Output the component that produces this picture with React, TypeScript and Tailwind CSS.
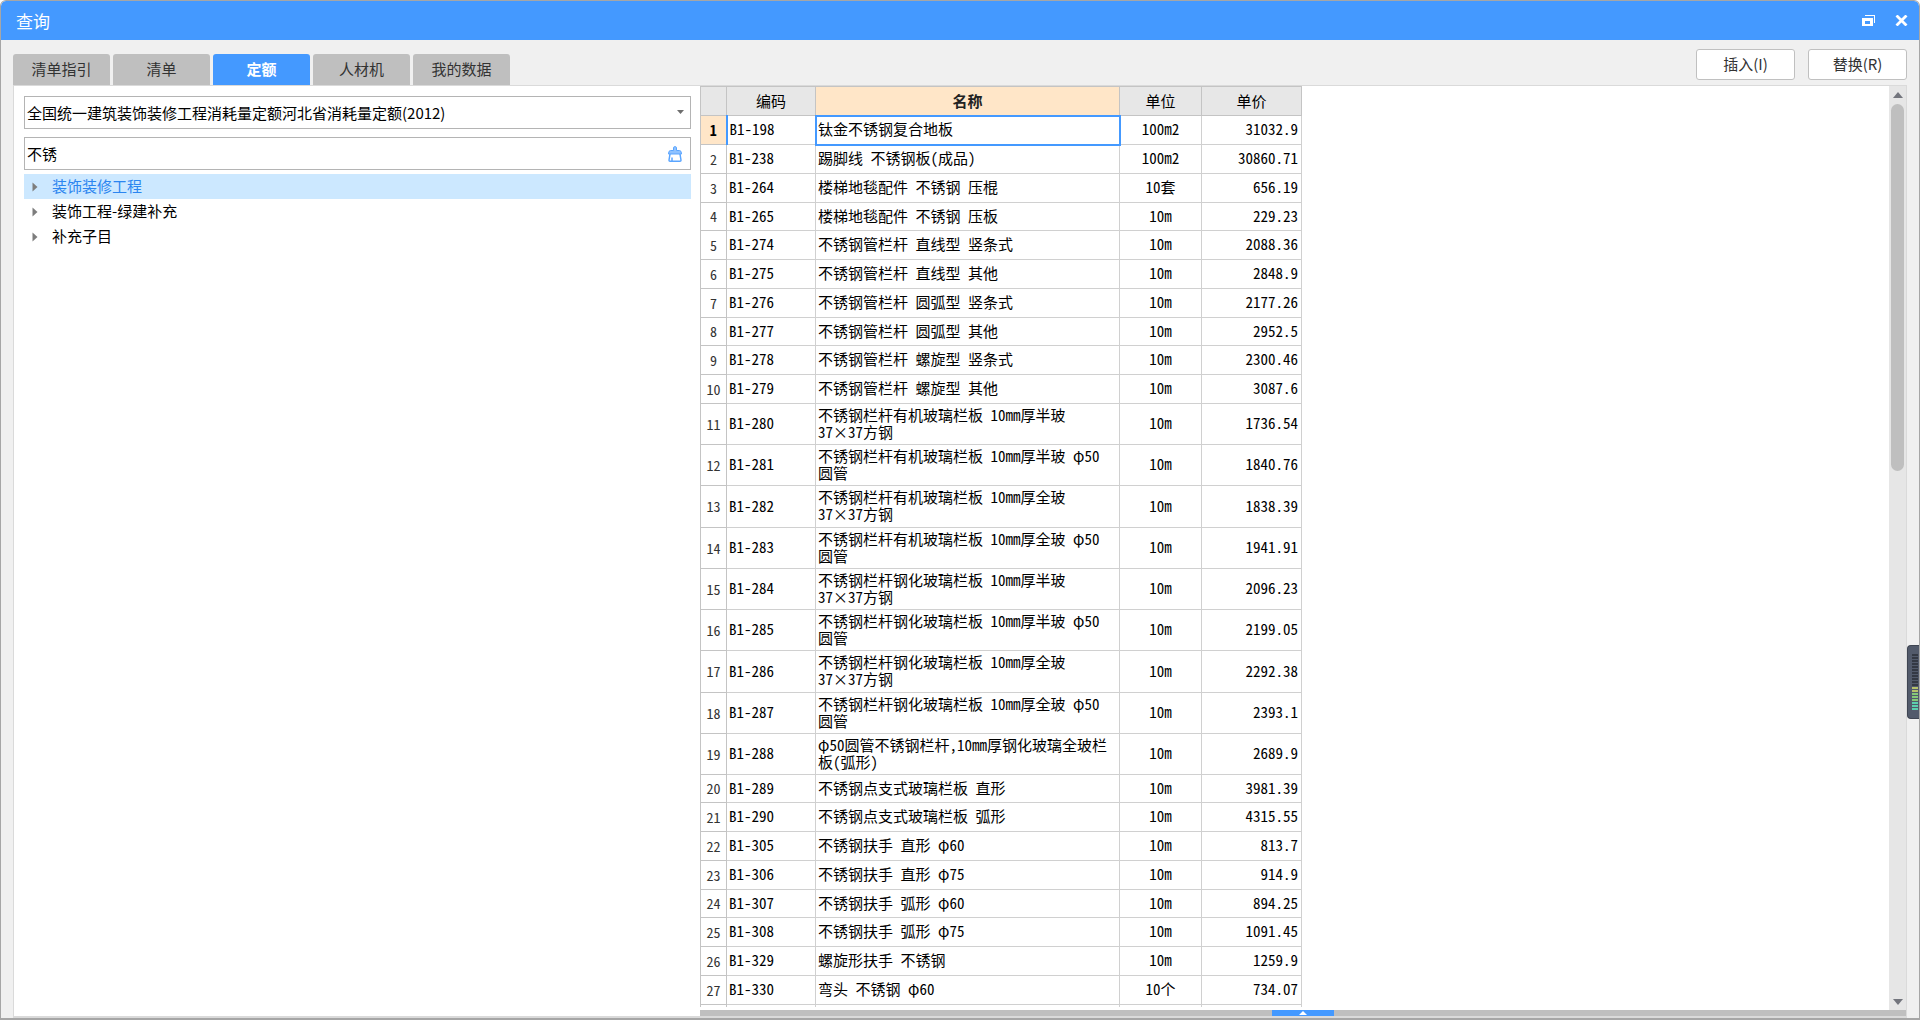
import { useState } from 'react';

const tabs = ['清单指引', '清单', '定额', '人材机', '我的数据'];

const treeNodes = ['装饰装修工程', '装饰工程-绿建补充', '补充子目'];

const rows = [
  { code: 'B1-198', name: '钛金不锈钢复合地板', unit: '100m2', price: '31032.9' },
  { code: 'B1-238', name: '踢脚线 不锈钢板(成品)', unit: '100m2', price: '30860.71' },
  { code: 'B1-264', name: '楼梯地毯配件 不锈钢 压棍', unit: '10套', price: '656.19' },
  { code: 'B1-265', name: '楼梯地毯配件 不锈钢 压板', unit: '10m', price: '229.23' },
  { code: 'B1-274', name: '不锈钢管栏杆 直线型 竖条式', unit: '10m', price: '2088.36' },
  { code: 'B1-275', name: '不锈钢管栏杆 直线型 其他', unit: '10m', price: '2848.9' },
  { code: 'B1-276', name: '不锈钢管栏杆 圆弧型 竖条式', unit: '10m', price: '2177.26' },
  { code: 'B1-277', name: '不锈钢管栏杆 圆弧型 其他', unit: '10m', price: '2952.5' },
  { code: 'B1-278', name: '不锈钢管栏杆 螺旋型 竖条式', unit: '10m', price: '2300.46' },
  { code: 'B1-279', name: '不锈钢管栏杆 螺旋型 其他', unit: '10m', price: '3087.6' },
  { code: 'B1-280', name: '不锈钢栏杆有机玻璃栏板 10mm厚半玻\n37×37方钢', unit: '10m', price: '1736.54' },
  { code: 'B1-281', name: '不锈钢栏杆有机玻璃栏板 10mm厚半玻 φ50\n圆管', unit: '10m', price: '1840.76' },
  { code: 'B1-282', name: '不锈钢栏杆有机玻璃栏板 10mm厚全玻\n37×37方钢', unit: '10m', price: '1838.39' },
  { code: 'B1-283', name: '不锈钢栏杆有机玻璃栏板 10mm厚全玻 φ50\n圆管', unit: '10m', price: '1941.91' },
  { code: 'B1-284', name: '不锈钢栏杆钢化玻璃栏板 10mm厚半玻\n37×37方钢', unit: '10m', price: '2096.23' },
  { code: 'B1-285', name: '不锈钢栏杆钢化玻璃栏板 10mm厚半玻 φ50\n圆管', unit: '10m', price: '2199.05' },
  { code: 'B1-286', name: '不锈钢栏杆钢化玻璃栏板 10mm厚全玻\n37×37方钢', unit: '10m', price: '2292.38' },
  { code: 'B1-287', name: '不锈钢栏杆钢化玻璃栏板 10mm厚全玻 φ50\n圆管', unit: '10m', price: '2393.1' },
  { code: 'B1-288', name: 'φ50圆管不锈钢栏杆,10mm厚钢化玻璃全玻栏\n板(弧形)', unit: '10m', price: '2689.9' },
  { code: 'B1-289', name: '不锈钢点支式玻璃栏板 直形', unit: '10m', price: '3981.39' },
  { code: 'B1-290', name: '不锈钢点支式玻璃栏板 弧形', unit: '10m', price: '4315.55' },
  { code: 'B1-305', name: '不锈钢扶手 直形 φ60', unit: '10m', price: '813.7' },
  { code: 'B1-306', name: '不锈钢扶手 直形 φ75', unit: '10m', price: '914.9' },
  { code: 'B1-307', name: '不锈钢扶手 弧形 φ60', unit: '10m', price: '894.25' },
  { code: 'B1-308', name: '不锈钢扶手 弧形 φ75', unit: '10m', price: '1091.45' },
  { code: 'B1-329', name: '螺旋形扶手 不锈钢', unit: '10m', price: '1259.9' },
  { code: 'B1-330', name: '弯头 不锈钢 φ60', unit: '10个', price: '734.07' },
];

const meterBars = Array.from({ length: 19 }, (_, i) => i);

function meterColor(i: number) {
  if (i < 11) return '#343944';
  if (i < 13) return '#b5c26a';
  if (i < 16) return '#86c978';
  return '#5ccfae';
}

// rows average 28.75px (one line) and 41.25px (two lines)
function rowHeight(name: string, i: number) {
  if (name.includes('\n')) return i % 4 === 0 ? 'h-[42px]' : 'h-[41px]';
  return i % 4 === 3 ? 'h-[28px]' : 'h-[29px]';
}

function TitleBar() {
  return (
    <header className="flex h-[39px] shrink-0 items-center justify-between rounded-t-[5px] bg-[#4499ff] pl-[15px] pr-[11px] text-white">
      <h1 className="pt-px text-[17px] leading-6">查询</h1>
      <div className="flex items-center gap-5">
        <button aria-label="还原">
          <svg width="13" height="11" viewBox="0 0 13 11" shapeRendering="crispEdges">
            <path d="M3 0H13V8H12V1H3Z" fill="white" />
            <path d="M0 3H11V11H0ZM3 6V9H8V6Z" fill="white" fillRule="evenodd" />
          </svg>
        </button>
        <button aria-label="关闭">
          <svg width="13" height="11" viewBox="0 0 13 11">
            <path d="M1.5 0.5L11.5 10.5M11.5 0.5L1.5 10.5" stroke="white" strokeWidth="2.8" />
          </svg>
        </button>
      </div>
    </header>
  );
}

function SidePanel() {
  const [keyword, setKeyword] = useState('不锈');
  const [selected, setSelected] = useState(0);

  return (
    <aside className="flex w-[686px] shrink-0 flex-col pl-[10px] pr-[9px] pt-[10px]">
      <div className="relative">
        <select
          aria-label="定额库"
          className="h-[33px] w-full appearance-none border border-[#b4b4b4] bg-white px-[2px] pt-px text-[15px] text-black outline-none"
        >
          <option>全国统一建筑装饰装修工程消耗量定额河北省消耗量定额(2012)</option>
        </select>
        <svg className="pointer-events-none absolute right-[7px] top-[14px]" width="7" height="4" viewBox="0 0 7 4">
          <path d="M0 0H7L3.5 4Z" fill="#6e6e6e" />
        </svg>
      </div>
      <div className="mt-2 flex h-[33px] items-center border border-[#b4b4b4] pr-2">
        <input
          aria-label="关键字"
          className="min-w-0 flex-1 px-[2px] pt-px text-[15px] text-black outline-none"
          value={keyword}
          onChange={(e) => setKeyword(e.target.value)}
        />
        <button aria-label="清除" onClick={() => setKeyword('')}>
          <svg width="14" height="16" viewBox="0 0 14 16" fill="none">
            <path
              d="M5.5 4.5V1.5Q5.5 0.7 7 0.7Q8.5 0.7 8.5 1.5V4.5H11.5Q13.5 4.5 13.5 8H0.5Q0.5 4.5 2.5 4.5Z"
              fill="#8fc2ff"
              stroke="#5aa5ff"
            />
            <path d="M2 8L1 14.2Q1 15.2 2 15.2H12Q13 15.2 13 14.2L12 8" stroke="#5aa5ff" strokeWidth="1.5" />
            <path d="M4 15V11.5" stroke="#5aa5ff" strokeWidth="1.5" />
          </svg>
        </button>
      </div>
      <ul className="mt-1 text-[15px]" role="tree">
        {treeNodes.map((node, i) => (
          <li key={node} role="treeitem" aria-selected={i === selected}>
            <button
              onClick={() => setSelected(i)}
              className={`flex h-[25px] w-full items-center gap-[14px] pl-2 text-left ${
                i === selected ? 'bg-[#cce8ff] text-[#2b85f0]' : 'text-black'
              }`}
            >
              <svg width="6" height="10" viewBox="0 0 6 10">
                <path d="M0.5 0.5L5.5 5L0.5 9.5Z" fill="#7d7d7d" />
              </svg>
              {node}
            </button>
          </li>
        ))}
      </ul>
    </aside>
  );
}

function ResultTable() {
  const head = 'border border-[#c4c4c4] bg-[#e7e7e7] pb-[2px] font-normal';
  const cell = 'border border-[#d0d0d0] pb-[3px]';

  return (
    <table className="w-[602px] table-fixed border-collapse font-['Noto_Sans_Mono_CJK_SC','Noto_Sans_CJK_SC',monospace] text-[15px] leading-[17px] text-black">
      <colgroup>
        <col className="w-[26px]" />
        <col className="w-[89px]" />
        <col className="w-[304px]" />
        <col className="w-[82px]" />
        <col className="w-[100px]" />
      </colgroup>
      <thead>
        <tr className="h-[29px]">
          <th className={head} aria-label="序号"></th>
          <th className={head}>编码</th>
          <th className="border border-[#c4c4c4] bg-[#ffe6c8] pb-[2px] font-bold text-[#222]">名称</th>
          <th className={head}>单位</th>
          <th className={head}>单价</th>
        </tr>
      </thead>
      <tbody>
        {rows.map((row, i) => (
          <tr key={row.code} className={rowHeight(row.name, i)}>
            <td
              className={`border border-[#c4c4c4] text-center text-[14px] ${
                i === 0 ? 'border-r-2 border-r-[#4499ff] bg-[#ffe6c8] font-bold' : 'text-[#333]'
              }`}
            >
              {i + 1}
            </td>
            <td className={`${cell} pl-[2px]`}>{row.code}</td>
            <td className={`${cell} whitespace-pre pl-[2px] ${i === 0 ? 'outline-2 -outline-offset-1 outline-[#4499ff]' : ''}`}>
              {row.name}
            </td>
            <td className={`${cell} text-center`}>{row.unit}</td>
            <td className={`${cell} pr-[3px] text-right`}>{row.price}</td>
          </tr>
        ))}
        <tr className="h-[29px]">
          <td className="border border-[#c4c4c4]"></td>
          <td className={cell}></td>
          <td className={cell}></td>
          <td className={cell}></td>
          <td className={cell}></td>
        </tr>
      </tbody>
    </table>
  );
}

function ScrollBar() {
  return (
    <div className="flex w-[17px] shrink-0 flex-col items-center bg-[#e6e6e6] pb-[5px] pt-[6px]">
      <svg width="10" height="6" viewBox="0 0 10 6">
        <path d="M0 6L5 0L10 6Z" fill="#73757d" />
      </svg>
      <div className="mt-[6px] flex w-[13px] flex-1 flex-col">
        <div className="h-[41%] rounded-full bg-[#bfbfbf]"></div>
      </div>
      <svg width="10" height="6" viewBox="0 0 10 6">
        <path d="M0 0L5 6L10 0Z" fill="#73757d" />
      </svg>
    </div>
  );
}

export default function App() {
  const [activeTab, setActiveTab] = useState(2);

  return (
    <div className="relative flex h-screen flex-col overflow-hidden rounded-t-md border border-b-2 border-[#a6a6a6] bg-[#f0f0f0] font-['Noto_Sans_CJK_SC',sans-serif]">
      <TitleBar />

      <div className="flex shrink-0 items-end justify-between px-3 pt-[9px]">
        <nav className="flex gap-[3px]" role="tablist">
          {tabs.map((tab, i) => (
            <button
              key={tab}
              role="tab"
              aria-selected={i === activeTab}
              onClick={() => setActiveTab(i)}
              className={`h-[31px] w-[97px] rounded-t-[3px] text-[15px] ${
                i === activeTab ? 'bg-[#4499ff] font-bold text-white' : 'bg-[#bfbfbf] text-[#333]'
              }`}
            >
              {tab}
            </button>
          ))}
        </nav>
        <div className="flex gap-[13px] pb-[5px]">
          <button className="h-[31px] w-[99px] rounded-[3px] border border-[#c0c0c0] bg-white text-[15px] text-[#333]">
            插入(I)
          </button>
          <button className="h-[31px] w-[99px] rounded-[3px] border border-[#c0c0c0] bg-white text-[15px] text-[#333]">
            替换(R)
          </button>
        </div>
      </div>

      <main className="mx-3 flex min-h-0 flex-1 border border-b-2 border-[#dadada] bg-white">
        <SidePanel />
        <section className="flex min-w-0 flex-1 flex-col">
          <div className="flex min-h-0 flex-1">
            <div className="mb-[3px] min-w-0 flex-1 overflow-hidden">
              <ResultTable />
            </div>
            <ScrollBar />
          </div>
          <div className="flex h-[6px] shrink-0 justify-center bg-[#bfbfbf]">
            <button aria-label="展开" className="flex w-[62px] items-center justify-center bg-[#4499ff]">
              <svg width="8" height="4" viewBox="0 0 8 4">
                <path d="M0 4L4 0L8 4Z" fill="white" />
              </svg>
            </button>
          </div>
        </section>
      </main>

      <div className="absolute right-0 top-[644px] flex h-[74px] w-3 flex-col items-end gap-px rounded-l-[4px] border border-r-0 border-[#3f4552] bg-[#525a6b] pr-px pt-2">
        {meterBars.map((i) => (
          <span key={i} className="h-[2px] w-[6px] shrink-0" style={{ backgroundColor: meterColor(i) }}></span>
        ))}
      </div>
    </div>
  );
}
